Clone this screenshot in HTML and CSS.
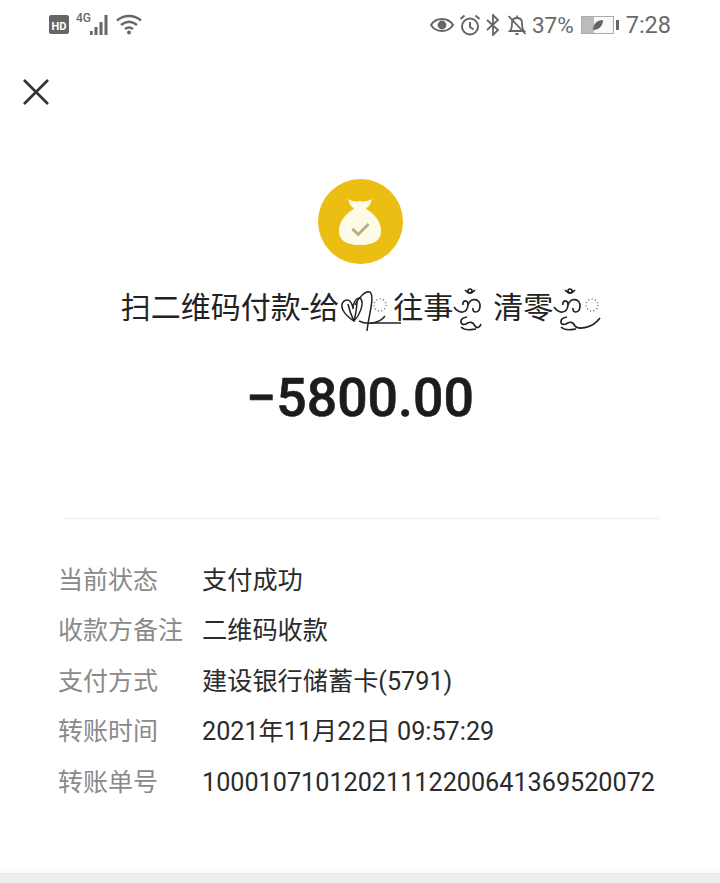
FILE: index.html
```html
<!DOCTYPE html>
<html lang="zh">
<head>
	<meta charset="utf-8">
	<title>账单详情</title>
	<link rel="stylesheet" href="styles.css">
</head>
<body>
	<div class="status-bar">
		<div class="status-left">
			<svg class="ic-hd" viewBox="0 0 20 20" width="20" height="20"><rect x="0" y="0" width="20" height="19" rx="2" fill="#666"/><text x="10" y="14.5" text-anchor="middle" class="hd-text">HD</text></svg>
			<div class="signal">
				<span class="signal-4g">4G</span>
				<svg viewBox="0 0 22 22" width="22" height="22"><g fill="#666"><rect x="1" y="17" width="2.6" height="4"/><rect x="5.5" y="13" width="3" height="8"/><rect x="10.5" y="8" width="3" height="13"/><rect x="15.5" y="1" width="3" height="20"/></g></svg>
			</div>
			<svg viewBox="0 0 26 22" width="26" height="22" fill="none" stroke="#666" stroke-width="2.4"><path d="M1 6.5C8 .5 18 .5 25 6.5"/><path d="M5 11C10 7 16 7 21 11"/><path d="M9 15C11.5 13 14.5 13 17 15"/><circle cx="13" cy="18.5" r="2" fill="#666" stroke="none"/></svg>
		</div>
		<div class="status-right">
			<svg viewBox="0 0 24 16" width="24" height="16"><path d="M1 8C6 0 18 0 23 8C18 16 6 16 1 8Z" fill="none" stroke="#666" stroke-width="2"/><circle cx="12" cy="8" r="4.4" fill="#666"/></svg>
			<svg viewBox="0 0 22 22" width="22" height="22" fill="none" stroke="#666" stroke-width="2"><circle cx="11" cy="12.5" r="8"/><path d="M11 8v5l3.5 2.5"/><path d="M1.5 5L5.5 1.5M20.5 5L16.5 1.5"/></svg>
			<svg viewBox="0 0 14 22" width="14" height="22" fill="none" stroke="#666" stroke-width="1.8"><path d="M1 6l11 10-5 5V1l5 5L1 16"/></svg>
			<svg class="ic-bell" viewBox="0 0 20 22" width="20" height="22" fill="none" stroke="#666" stroke-width="1.8"><path d="M3 17c2-2 2-4 2-8 0-3 2-5 5-5s5 2 5 5c0 4 0 6 2 8z"/><path d="M8.5 20h3M10 1.5v2M1.5 2l17 18"/></svg>
			<span class="status-text">37%</span>
			<div class="battery">
				<div class="battery-body">
					<div class="battery-fill"></div>
					<svg class="battery-leaf" viewBox="0 0 12 12" width="12" height="12"><path d="M1 11C1 5 5 1 11 1C11 7 7 11 1 11Z" fill="#666"/></svg>
				</div>
				<div class="battery-cap"></div>
			</div>
			<span class="status-text status-time">7:28</span>
		</div>
	</div>

	<div class="nav">
		<svg viewBox="0 0 26 26" width="26" height="26" stroke="#333" stroke-width="2.6"><path d="M1 1L25 25M25 1L1 25"/></svg>
	</div>

	<div class="summary">
		<div class="coin">
			<svg viewBox="0 0 48 52" width="46" height="50"><path d="M12 2C17 5 20 5 24 4C28 5 31 5 36 2C36 7 33 10 30 12C38 17 46 25 46 35C46 46 37 50 24 50C11 50 2 46 2 35C2 25 10 17 18 12C15 10 12 7 12 2Z" fill="#fdfbe8"/><path d="M16 33L22 39L33 28" fill="none" stroke="#b4b08a" stroke-width="3"/></svg>
		</div>
		<div class="title">
			<span>扫二维码付款-给</span>
			<!-- ornaments from the nickname, with their dotted halos -->
			<svg class="orn orn-heart" viewBox="0 0 52 44" width="52" height="44" fill="none" stroke="#222" stroke-width="1.5"><path d="M15 32C4 25 0 17 5 12C10 9 13 13 14 20C14 12 19 7 22 10C25 15 21 26 15 32Z"/><path d="M9 15C10 20 12 26 15 32M18 12C18 18 17 24 15 32"/><path d="M16 16C20 8 27 1 31 3C36 8 30 24 28 42"/><path d="M20 32C28 36 40 35 46 27"/><path d="M31 34H62"/><circle cx="41" cy="16" r="6" stroke-width="1.6" stroke-dasharray="1 2.4" stroke="#777"/></svg>
			<span>往事</span>
			<svg class="orn" viewBox="0 0 30 46" width="30" height="46" fill="none" stroke="#222" stroke-width="1.7"><circle cx="17" cy="3" r="2"/><path d="M12 2Q17 8 22 2"/><path d="M1 19C6 26 14 26 15 17C15 11 9 12 10 17M15 17C17 9 28 10 27 19C26 26 19 25 20 20"/><path d="M14 29C6 30 6 38 13 36C17 33 20 34 22 38C24 41 27 39 28 36M8 39C13 44 20 41 23 41"/></svg>
			<span class="title-gap">清零</span>
			<svg class="orn orn-tail" viewBox="0 0 50 46" width="50" height="46" fill="none" stroke="#222" stroke-width="1.7"><circle cx="17" cy="3" r="2"/><path d="M12 2Q17 8 22 2"/><path d="M1 19C6 26 14 26 15 17C15 11 9 12 10 17M15 17C17 9 28 10 27 19C26 26 19 25 20 20"/><path d="M14 29C6 30 6 38 13 36C17 33 20 34 22 38C24 41 38 42 47 30"/><path d="M8 39C13 44 20 41 23 41"/><circle cx="39" cy="17" r="6" stroke-width="1.6" stroke-dasharray="1 2.4" stroke="#777"/></svg>
		</div>
		<div class="amount">−5800.00</div>
	</div>

	<div class="divider"></div>

	<div class="details">
		<div class="row"><span class="label">当前状态</span><span class="value">支付成功</span></div>
		<div class="row"><span class="label">收款方备注</span><span class="value">二维码收款</span></div>
		<div class="row"><span class="label">支付方式</span><span class="value">建设银行储蓄卡(5791)</span></div>
		<div class="row"><span class="label">转账时间</span><span class="value">2021年11月22日 09:57:29</span></div>
		<div class="row"><span class="label">转账单号</span><span class="value">10001071012021112200641369520072</span></div>
	</div>

	<div class="bottom-strip"></div>
</body>
</html>
```

FILE: styles.css
```css
html, body {
	height: 100%;
}
body {
	margin: 0;
	display: flex;
	flex-direction: column;
	overflow: hidden;
	background-color: #fff;
	color: #222;
	font-family: Roboto, "Noto Sans CJK SC", sans-serif;
}

/* status bar */
.status-bar {
	display: flex;
	justify-content: space-between;
	align-items: center;
	height: 50px;
	padding: 0 49px;
	color: #6a6a6a;
}
.status-left, .status-right {
	display: flex;
	align-items: center;
}
.status-left {
	gap: 5px;
}
.status-right {
	gap: 5px;
}
.ic-bell {
	margin-left: 2px;
}
.hd-text {
	font-size: 11px;
	font-weight: 700;
	fill: #fff;
}
.signal {
	display: flex;
	align-items: flex-end;
}
.signal-4g {
	font-size: 12px;
	font-weight: 500;
	align-self: flex-start;
	margin: -3px -2px 0 2px;
}
.status-text {
	font-size: 22.5px;
}
.status-time {
	font-size: 23.5px;
}
.battery {
	display: flex;
	align-items: center;
	gap: 2px;
	margin: 0 2px;
}
.battery-body {
	display: flex;
	align-items: center;
	width: 31px;
	height: 16px;
	border: 1px solid #aaa;
	background-color: #fafafa;
	position: relative;
}
.battery-fill {
	width: 12px;
	height: 100%;
	background-color: #bbb;
}
.battery-leaf {
	position: absolute;
	left: 10px;
	top: 2px;
}
.battery-cap {
	width: 3px;
	height: 10px;
	background-color: #666;
}

/* close button */
.nav {
	padding: 29px 0 0 23px;
	height: 26px;
}
.nav svg {
	display: block;
}

/* payee and amount */
.summary {
	display: flex;
	flex-direction: column;
	align-items: center;
	padding-top: 74px;
}
.coin {
	display: flex;
	justify-content: center;
	align-items: center;
	width: 85px;
	height: 85px;
	border-radius: 50%;
	background-color: #ecbd12;
}
.title {
	display: flex;
	align-items: center;
	margin-top: 17px;
	height: 54px;
	padding-left: 4px;
	font-size: 30px;
	line-height: 40px;
	color: #222;
}
.orn {
	flex: none;
	margin-top: 6px;
	overflow: visible;
}
.orn-heart {
	margin-right: 2px;
}
.title-gap {
	margin-left: 10px;
}
.amount {
	margin-top: 33px;
	font-size: 53.6px;
	line-height: 60px;
	font-weight: 500;
	-webkit-text-stroke: 0.6px #1c1c1c;
	color: #1c1c1c;
}

.divider {
	height: 1px;
	margin: 90px 61px 0 64px;
	background-color: #eeeeee;
}

/* detail rows */
.details {
	display: flex;
	flex-direction: column;
	gap: 14.4px;
	padding: 44px 0 0 58px;
	font-size: 25px;
	line-height: 36px;
}
.row {
	display: flex;
}
.label {
	flex: none;
	width: 144px;
	color: #8a8a8a;
}
.value {
	font-size: 25.2px;
	color: #2b2b2b;
	white-space: nowrap;
}

.bottom-strip {
	margin-top: auto;
	height: 9px;
	border-top: 1px solid #e8e8e8;
	background-color: #eeeeee;
	box-shadow: 0 -4px 4px #fafafa;
}
```
